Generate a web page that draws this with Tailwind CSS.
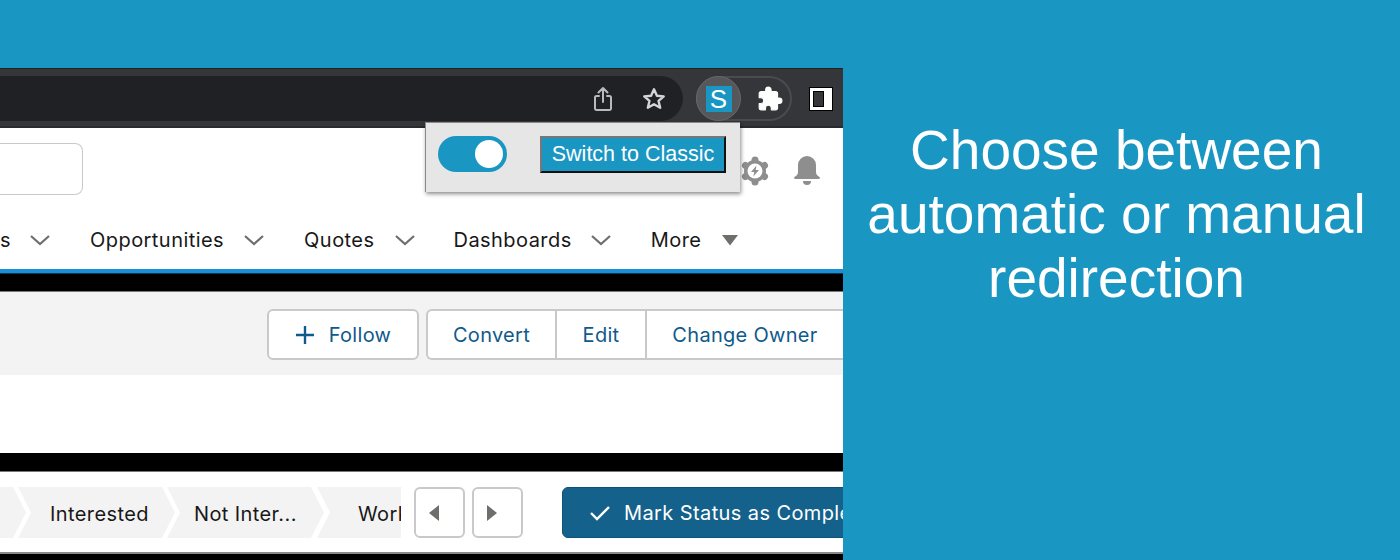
<!DOCTYPE html>
<html>
<head>
<meta charset="utf-8">
<script src="https://cdn.jsdelivr.net/npm/@tailwindcss/browser@4"></script>
</head>
<body class="m-0">
<div class="flex w-[1400px] h-[560px] overflow-hidden bg-[#1a96c2] font-['Inter',sans-serif]">
  <div class="relative w-[843px] h-[560px] pt-[68px] shrink-0 flex flex-col overflow-hidden">
    <!-- browser toolbar -->
    <div class="h-[60px] shrink-0 bg-[#35363a] border-t border-[#222] border-b-2 border-b-[#2a2a2c] flex items-start pt-[7px]">
      <div class="w-[683px] h-[45px] shrink-0 bg-[#202124] rounded-r-[23px] flex items-center justify-end pr-[16px] gap-[26px]">
        <svg class="w-[24px] h-[28px]" viewBox="0 0 24 28" fill="none" stroke="#b9babc" stroke-width="2" stroke-linecap="round" stroke-linejoin="round"><path d="M12 17V3M7.500 7.500 12 3l4.500 4.500M8 11H5.500A1.500 1.500 0 0 0 4 12.500v11A1.500 1.500 0 0 0 5.500 25h13a1.500 1.500 0 0 0 1.500-1.500v-11A1.500 1.500 0 0 0 18.500 11H16"/></svg>
        <svg class="w-[26px] h-[26px]" viewBox="0 0 24 24" fill="none" stroke="#d4d5d8" stroke-width="2.200" stroke-linejoin="round"><path d="m12 3 2.700 6 6.300.6-4.800 4.200 1.500 6.300L12 16.800 6.300 20.100l1.500-6.300L3 9.600 9.300 9z"/></svg>
      </div>
      <div class="ml-[13px] w-[96px] h-[45px] shrink-0 rounded-[23px] border-2 border-[#4a4b4f] flex items-center relative">
        <div class="absolute left-[-2px] top-[-2px] w-[45px] h-[45px] rounded-full bg-[#55575a] border border-[#66686b] flex items-center justify-center">
          <div class="w-[26px] h-[26px] bg-[#1a96c2] text-white text-[26px] leading-[26px] text-center font-['Liberation_Sans',sans-serif]">S</div>
        </div>
        <svg class="absolute left-[59px] top-[8px] w-[26px] h-[26px]" viewBox="0 0 24 24" fill="#fff" stroke="#fff" stroke-width="1" stroke-linejoin="round"><path d="M20.500 11H19V7a2 2 0 0 0-2-2h-4V3.500a2.500 2.500 0 0 0-5 0V5H4a2 2 0 0 0-2 2v3.800h1.500a2.700 2.700 0 0 1 0 5.400H2V20a2 2 0 0 0 2 2h3.800v-1.500a2.700 2.700 0 0 1 5.400 0V22H17a2 2 0 0 0 2-2v-4h1.500a2.500 2.500 0 0 0 0-5z"/></svg>
      </div>
      <div class="ml-[17px] mt-[11px] w-[24px] h-[24px] shrink-0 bg-white border border-black flex justify-start">
        <div class="ml-[3px] mt-[3px] w-[11px] h-[16px] bg-[#35363a] border border-black"></div>
      </div>
    </div>
    <!-- salesforce nav -->
    <div class="h-[141px] shrink-0 bg-white relative flex flex-col">
      <div class="h-[100px] shrink-0 flex items-start justify-between">
        <div class="w-[83px] h-[52px] mt-[15px] bg-white border border-[#c9c9c9] border-l-0 rounded-r-[8px]"></div>
        <div class="flex items-center gap-[22px] mt-[26px] mr-[21px]">
          <svg class="w-[30px] h-[30px] mt-[2px]" viewBox="0 0 30 30">
            <g stroke="#8e8e8e" stroke-width="7" stroke-linecap="round">
              <path d="M15 4v22"/>
              <path d="M5.500 9.500l19 11"/>
              <path d="M24.500 9.500l-19 11"/>
            </g>
            <circle cx="15" cy="15" r="11" fill="#8e8e8e"/>
            <circle cx="15" cy="15" r="7.500" fill="#fff"/>
            <path fill="#8e8e8e" d="M16.500 9.500 11 16h3.300l-1 4.500L19 14h-3.300z"/>
          </svg>
          <svg class="w-[30px] h-[30px]" viewBox="0 0 30 30" fill="#8e8e8e"><path d="M15 1a9 9 0 0 0-9 9v7c0 2.500-1.500 3.500-3.500 5-.8.700-.4 2 .7 2h23.600c1.100 0 1.500-1.300.7-2-2-1.500-3.500-2.500-3.500-5v-7a9 9 0 0 0-9-9z"/><path d="M11 26h8a4 4 0 0 1-8 0z"/></svg>
        </div>
      </div>
      <div class="flex items-center h-[24px] text-[20px] text-[#181818] tracking-[0.45px] whitespace-nowrap">
        <span class="w-[10px] overflow-hidden text-right">s</span>
        <svg class="ml-[20px] w-[20px] h-[12px]" viewBox="0 0 20 12" fill="none" stroke="#706e6b" stroke-width="2.200"><path d="m1 2 9 8 9-8"/></svg>
        <span class="ml-[40px]">Opportunities</span>
        <svg class="ml-[20px] w-[20px] h-[12px]" viewBox="0 0 20 12" fill="none" stroke="#706e6b" stroke-width="2.200"><path d="m1 2 9 8 9-8"/></svg>
        <span class="ml-[40px]">Quotes</span>
        <svg class="ml-[20px] w-[20px] h-[12px]" viewBox="0 0 20 12" fill="none" stroke="#706e6b" stroke-width="2.200"><path d="m1 2 9 8 9-8"/></svg>
        <span class="ml-[39px]">Dashboards</span>
        <svg class="ml-[19px] w-[20px] h-[12px]" viewBox="0 0 20 12" fill="none" stroke="#706e6b" stroke-width="2.200"><path d="m1 2 9 8 9-8"/></svg>
        <span class="ml-[40px]">More</span>
        <svg class="ml-[20px] w-[18px] h-[12px]" viewBox="0 0 18 12" fill="#706e6b"><path d="M1 1h16L9 11.500z"/></svg>
      </div>
    </div>
    <div class="h-[5px] shrink-0 bg-[#1b8fd6] border-b border-[#0a3a5c]"></div>
    <div class="h-[18px] shrink-0 bg-black border-b border-[#777]"></div>
    <!-- actions -->
    <div class="h-[83px] shrink-0 bg-[#f3f3f3] flex items-start pt-[17px] justify-end text-[20px] tracking-[0.3px] text-[#0f5a8c] leading-none">
      <div class="w-[152px] h-[51px] bg-white border-2 border-[#c9c9c9] rounded-[6px] flex items-center justify-center gap-[14px]">
        <svg class="w-[20px] h-[20px]" viewBox="0 0 20 20" stroke="#0f5a8c" stroke-width="2.400"><path d="M10 1v18M1 10h18"/></svg>
        <span>Follow</span>
      </div>
      <div class="ml-[7px] w-[417px] h-[51px] bg-white border-2 border-r-0 border-[#c9c9c9] rounded-l-[6px] flex items-center">
        <div class="w-[129px] h-full flex items-center justify-center border-r-2 border-[#c9c9c9]">Convert</div>
        <div class="w-[90px] h-full flex items-center justify-center border-r-2 border-[#c9c9c9]">Edit</div>
        <div class="flex-1 h-full flex items-center justify-center">Change Owner</div>
      </div>
    </div>
    <div class="h-[78px] shrink-0 bg-white"></div>
    <div class="h-[19px] shrink-0 bg-black border-b border-[#777]"></div>
    <!-- path -->
    <div class="h-[82px] shrink-0 bg-white flex items-start pt-[15px] text-[20px] tracking-[0.4px] text-[#181818] whitespace-nowrap border-b-2 border-[#8a8a8a]">
      <div class="relative w-[401px] h-[51px] shrink-0 overflow-hidden">
        <svg class="absolute inset-0 w-[401px] h-[51px]" viewBox="0 0 401 51" fill="#f3f3f3"><path d="M0 0h13l13 25.500L13 51H0zM18 0h144l13 25.500L162 51H18l13-25.500zM167 0h144l13 25.500L311 51H167l13-25.500zM317 0h84v51h-84l13-25.500z"/></svg>
        <span class="absolute left-[50px] top-[12px]">Interested</span>
        <span class="absolute left-[194px] top-[12px]">Not Inter...</span>
        <span class="absolute left-[358px] top-[12px]">Work</span>
      </div>
      <div class="ml-[13px] w-[51px] h-[51px] shrink-0 bg-white border-2 border-[#c9c9c9] rounded-[6px] flex items-center justify-center">
        <svg class="w-[12px] h-[18px] mr-[12px]" viewBox="0 0 12 18" fill="#706e6b"><path d="M11 1v16L1 9z"/></svg>
      </div>
      <div class="ml-[7px] w-[51px] h-[51px] shrink-0 bg-white border-2 border-[#c9c9c9] rounded-[6px] flex items-center justify-center">
        <svg class="w-[12px] h-[18px] mr-[12px]" viewBox="0 0 12 18" fill="#706e6b"><path d="M1 1v16l10-8z"/></svg>
      </div>
      <div class="ml-[39px] w-[300px] h-[51px] shrink-0 bg-[#14618c] border border-[#0d5278] rounded-l-[6px] flex items-center pl-[26px] text-white">
        <svg class="w-[22px] h-[18px] shrink-0" viewBox="0 0 22 18" fill="none" stroke="#fff" stroke-width="2.400"><path d="m2 9 6 6L20 3"/></svg>
        <span class="ml-[13px]">Mark Status as Complete</span>
      </div>
    </div>
    <div class="flex-1 bg-black"></div>
    <!-- popup -->
    <div class="absolute left-[425px] top-[122px] w-[315px] h-[70px] bg-[#e6e6e6] border-t border-l border-[#8a8a8a] shadow-[1px_2px_4px_rgba(0,0,0,0.45)]">
      <div class="absolute left-[12px] top-[13px] w-[69px] h-[36px] rounded-full bg-[#1a96c2] flex items-center justify-end pr-[4px]">
        <div class="w-[28px] h-[28px] rounded-full bg-white"></div>
      </div>
      <div class="absolute left-[114px] top-[13px] w-[186px] h-[37px] bg-[#1a96c2] border-2 border-t-[#777] border-l-[#777] border-r-[#111] border-b-[#111] flex items-center justify-center text-white text-[21.500px] font-['Liberation_Sans',sans-serif] whitespace-nowrap">Switch to Classic</div>
    </div>
  </div>
  <!-- caption -->
  <div class="flex-1 pt-[118px] pr-[10px] text-center text-white text-[55px] leading-[64px] font-['Liberation_Sans',sans-serif] whitespace-nowrap">Choose between<br>automatic or manual<br>redirection</div>
</div>
</body>
</html>
